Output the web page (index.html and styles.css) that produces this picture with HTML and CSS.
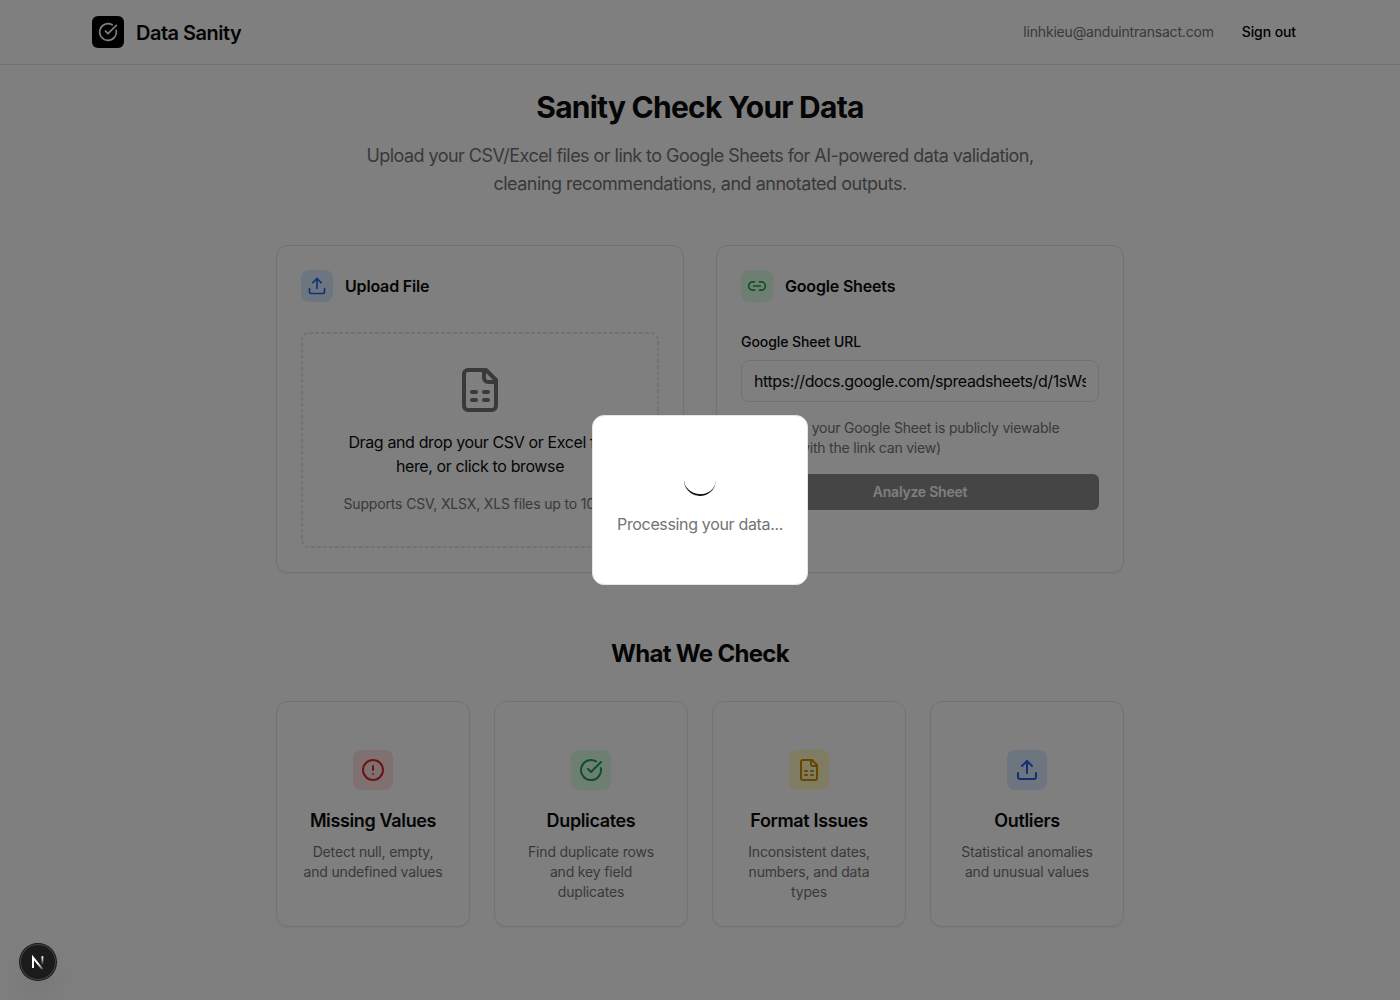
FILE: index.html
```html
<!DOCTYPE html>
<html lang="en">
<head>
<meta charset="utf-8">
<title>Data Sanity</title>
<link rel="stylesheet" href="styles.css">
</head>
<body>
<svg class="sprite" aria-hidden="true">
  <symbol id="check" viewBox="0 0 24 24"><path d="M21.801 10A10 10 0 1 1 17 3.335"/><path d="m9 11 3 3L22 4"/></symbol>
  <symbol id="upload" viewBox="0 0 24 24"><path d="M12 3v12"/><path d="m17 8-5-5-5 5"/><path d="M21 15v4a2 2 0 0 1-2 2H5a2 2 0 0 1-2-2v-4"/></symbol>
  <symbol id="link" viewBox="0 0 24 24"><path d="M9 17H7A5 5 0 0 1 7 7h2"/><path d="M15 7h2a5 5 0 1 1 0 10h-2"/><path d="M8 12h8"/></symbol>
  <symbol id="sheet" viewBox="0 0 24 24"><path d="M15 2H6a2 2 0 0 0-2 2v16a2 2 0 0 0 2 2h12a2 2 0 0 0 2-2V7Z"/><path d="M14 2v4a2 2 0 0 0 2 2h4"/><path d="M8 13h2"/><path d="M14 13h2"/><path d="M8 17h2"/><path d="M14 17h2"/></symbol>
  <symbol id="alert" viewBox="0 0 24 24"><circle cx="12" cy="12" r="10"/><path d="M12 8v4"/><path d="M12 16h.01"/></symbol>
</svg>

<header class="topbar">
  <div class="topbar-inner">
    <div class="brand">
      <span class="brand-mark"><svg class="icon icon-20"><use href="#check"/></svg></span>
      <span class="brand-name">Data Sanity</span>
    </div>
    <div class="account">
      <span class="email">linhkieu@anduintransact.com</span>
      <button class="sign-out">Sign out</button>
    </div>
  </div>
</header>

<main class="page">
  <h1 class="title">Sanity Check Your Data</h1>
  <p class="lead">Upload your CSV/Excel files or link to Google Sheets for AI-powered data validation,<br><span class="lead-end">cleaning recommendations, and annotated outputs.</span></p>

  <section class="sources">
    <div class="card source">
      <div class="source-head">
        <span class="tile tile-sm blue"><svg class="icon icon-20"><use href="#upload"/></svg></span>
        <h2 class="source-title">Upload File</h2>
      </div>
      <div class="dropzone">
        <svg class="icon icon-48"><use href="#sheet"/></svg>
        <p class="drop-text">Drag and drop your CSV or Excel file<br>here, or click to browse</p>
        <p class="drop-hint">Supports CSV, XLSX, XLS files up to 10MB</p>
        <svg class="dropzone-outline"><rect x="1" y="1" width="356" height="214" rx="7"/></svg>
      </div>
    </div>
    <div class="card source">
      <div class="source-head">
        <span class="tile tile-sm green"><svg class="icon icon-20"><use href="#link"/></svg></span>
        <h2 class="source-title">Google Sheets</h2>
      </div>
      <div class="form">
        <label class="label" for="url">Google Sheet URL</label>
        <input class="input" id="url" type="text" value="https://docs.google.com/spreadsheets/d/1sWsQx7Kd">
        <p class="note">Make sure your Google Sheet is publicly viewable<br>(Anyone with the link can view)</p>
        <button class="analyze">Analyze Sheet</button>
      </div>
    </div>
  </section>

  <h2 class="subtitle">What We Check</h2>
  <section class="checks">
    <div class="card check">
      <span class="tile red"><svg class="icon icon-24"><use href="#alert"/></svg></span>
      <h3 class="check-title">Missing Values</h3>
      <p class="check-text">Detect null, empty,<br>and undefined values</p>
    </div>
    <div class="card check">
      <span class="tile green"><svg class="icon icon-24"><use href="#check"/></svg></span>
      <h3 class="check-title">Duplicates</h3>
      <p class="check-text">Find duplicate rows<br>and key field<br>duplicates</p>
    </div>
    <div class="card check">
      <span class="tile yellow"><svg class="icon icon-24"><use href="#sheet"/></svg></span>
      <h3 class="check-title">Format Issues</h3>
      <p class="check-text">Inconsistent dates,<br>numbers, and data<br>types</p>
    </div>
    <div class="card check">
      <span class="tile blue"><svg class="icon icon-24"><use href="#upload"/></svg></span>
      <h3 class="check-title">Outliers</h3>
      <p class="check-text">Statistical anomalies<br>and unusual values</p>
    </div>
  </section>
</main>

<div class="overlay">
  <div class="dialog">
    <div class="spinner"></div>
    <p class="dialog-text">Processing your data...</p>
  </div>
</div>

<div class="dev-badge">
  <svg width="36" height="36" viewBox="0 0 36 36" fill="none">
    <defs>
      <linearGradient id="fade-diag" gradientUnits="userSpaceOnUse" x1="19" y1="19" x2="23.5" y2="25.5"><stop stop-color="#fff"/><stop offset="1" stop-color="#fff" stop-opacity="0.15"/></linearGradient>
      <linearGradient id="fade-bar" gradientUnits="userSpaceOnUse" x1="22" y1="13" x2="22" y2="21"><stop stop-color="#fff"/><stop offset="1" stop-color="#fff" stop-opacity="0"/></linearGradient>
    </defs>
    <path d="M13 24V13.6L22.4 25.2" stroke="url(#fade-diag)" stroke-width="2"/>
    <path d="M22.4 12.2V21" stroke="url(#fade-bar)" stroke-width="1.8"/>
  </svg>
</div>
</body>
</html>
```
FILE: styles.css
```css
* { box-sizing: border-box; margin: 0; }
body {
  height: 1000px;
  overflow: hidden;
  background: #fff;
  color: #0a0a0a;
  font-family: Inter, "Liberation Sans", sans-serif;
  font-size: 16px;
  line-height: 24px;
}
button, input { font: inherit; border: 0; }
.sprite { display: none; }
.icon { fill: none; stroke: currentColor; stroke-width: 2; stroke-linecap: round; stroke-linejoin: round; flex: none; }
.icon-20 { width: 20px; height: 20px; }
.icon-24 { width: 24px; height: 24px; }
.icon-48 { width: 48px; height: 48px; color: #737373; }

.topbar { height: 65px; border-bottom: 1px solid #e5e5e5; }
.topbar-inner { display: flex; justify-content: space-between; align-items: center; height: 64px; width: 1216px; margin: 0 auto; }
.brand { display: flex; align-items: center; gap: 12px; }
.brand-mark { display: grid; place-items: center; width: 32px; height: 32px; border-radius: 6px; background: #000; color: #fff; }
.brand-name { font-size: 20px; line-height: 28px; font-weight: 600; letter-spacing: -0.5px; padding-top: 1px; }
.account { display: flex; align-items: center; gap: 16px; font-size: 14px; line-height: 20px; }
.email { color: #737373; letter-spacing: -0.19px; }
.sign-out { padding: 6px 12px; background: none; color: #000; font-weight: 500; letter-spacing: -0.1px; }

.page { width: 848px; margin: 0 auto; padding-top: 24px; }
.title { font-size: 30px; line-height: 36px; font-weight: 700; letter-spacing: -0.77px; text-align: center; margin-bottom: 16px; }
.lead { font-size: 18px; line-height: 28px; letter-spacing: -0.55px; color: #737373; text-align: center; margin-bottom: 48px; padding-top: 1px; height: 56px; white-space: nowrap; }
.lead-end { letter-spacing: -0.5px; }

.card { border: 1px solid #e5e5e5; border-radius: 12px; background: #fff; box-shadow: 0 1px 2px rgba(0,0,0,.06); }
.sources { display: grid; grid-template-columns: 1fr 1fr; gap: 32px; margin-bottom: 64px; }
.source { height: 328px; padding: 24px; }
.source-head { display: flex; align-items: center; gap: 12px; margin-bottom: 30px; }
.source-title { font-size: 16px; line-height: 24px; font-weight: 600; letter-spacing: -0.18px; }
.tile { display: grid; place-items: center; width: 40px; height: 40px; border-radius: 8px; }
.tile-sm { width: 32px; height: 32px; }
.blue { background: #dbeafe; color: #2563eb; }
.green { background: #dcfce7; color: #16a34a; }
.red { background: #fee2e2; color: #dc2626; }
.yellow { background: #fef9c3; color: #ca8a04; }

.dropzone { position: relative; display: flex; flex-direction: column; align-items: center; gap: 16px; height: 216px; padding: 34px; text-align: center; white-space: nowrap; }
.dropzone-outline { position: absolute; inset: 0; width: 358px; height: 216px; fill: none; stroke: #e5e5e5; stroke-width: 2; stroke-dasharray: 4 2; }
.drop-text { letter-spacing: -0.38px; }
.drop-hint { font-size: 14px; line-height: 20px; letter-spacing: -0.15px; color: #737373; }

.form { display: flex; flex-direction: column; font-size: 14px; line-height: 20px; }
.label { font-weight: 500; letter-spacing: -0.08px; margin-bottom: 8px; }
.input { width: 100%; height: 42px; padding: 8px 12px; border: 1px solid #e5e5e5; border-radius: 8px; background: transparent; color: #0a0a0a; font-size: 16px; line-height: 24px; letter-spacing: -0.4px; }
.note { margin: 16px 0; color: #737373; letter-spacing: -0.21px; }
.analyze { height: 36px; border-radius: 6px; background: #171717; color: #fff; opacity: .5; font-weight: 600; letter-spacing: -0.24px; }

.subtitle { font-size: 24px; line-height: 32px; font-weight: 700; letter-spacing: -0.7px; text-align: center; height: 32px; padding-top: 1px; margin-bottom: 32px; }
.checks { display: grid; grid-template-columns: repeat(4, 1fr); gap: 24px; }
.check { display: flex; flex-direction: column; align-items: center; height: 226px; padding-top: 48px; text-align: center; white-space: nowrap; }
.check-title { margin-top: 17px; font-size: 18px; line-height: 28px; font-weight: 600; letter-spacing: -0.36px; }
.check-text { margin-top: 7px; font-size: 14px; line-height: 20px; letter-spacing: -0.17px; color: #737373; }

.overlay { position: fixed; inset: 0; display: grid; place-items: center; background: rgba(0,0,0,.5); }
.dialog { display: flex; flex-direction: column; align-items: center; gap: 16px; width: 216px; height: 170px; padding-top: 48px; border: 1px solid #e5e5e5; border-radius: 12px; background: #fff; }
.spinner { width: 32px; height: 32px; border-radius: 50%; border-bottom: 2px solid #171717; transform: rotate(4deg); }
.dialog-text { color: #737373; letter-spacing: -0.34px; white-space: nowrap; }

.dev-badge { position: fixed; left: 20px; bottom: 20px; width: 36px; height: 36px; border-radius: 50%; background: #1b1b1b; box-shadow: 0 0 0 1px #171717, inset 0 0 0 1px #444, 0 16px 32px -8px rgba(0,0,0,.24); }
```
